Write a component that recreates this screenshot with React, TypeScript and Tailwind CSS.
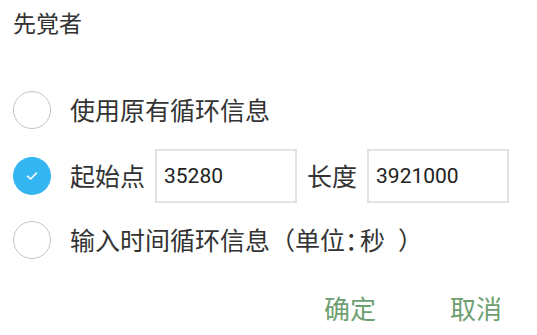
import { useState } from "react"

const font = { fontFamily: '"Noto Sans CJK SC", Roboto, sans-serif' }

function Radio({ checked, onClick }: { checked: boolean; onClick: () => void }) {
  return (
    <button
      onClick={onClick}
      className={
        "w-[38px] h-[38px] rounded-full flex items-center justify-center shrink-0 " +
        (checked ? "bg-[#33b5f1]" : "border-[1.5px] border-[#c4c4c4] bg-white")
      }
    >
      {checked && (
        <svg width="12" height="10" viewBox="0 0 12 10" fill="none">
          <path d="M1.5 5.2 L4.6 8 L10.5 2" stroke="white" strokeWidth="1.6" strokeLinecap="round" strokeLinejoin="round" />
        </svg>
      )}
    </button>
  )
}

export default function App() {
  const [mode, setMode] = useState(1)
  const [start, setStart] = useState("35280")
  const [length, setLength] = useState("3921000")

  return (
    <div className="w-[537px] h-[335px] bg-white text-[#333333] overflow-hidden" style={font}>
      <div className="pl-[13px] pt-[5px] text-[23px] leading-[34px]">先覚者</div>

      <div className="pl-[13px] mt-[49px] flex flex-col">
        <div className="flex items-center h-[44px]">
          <Radio checked={mode === 0} onClick={() => setMode(0)} />
          <span className="ml-[19px] text-[25px]">使用原有循环信息</span>
        </div>

        <div className="flex items-center h-[54px] mt-[17px]">
          <Radio checked={mode === 1} onClick={() => setMode(1)} />
          <span className="ml-[19px] text-[25px]">起始点</span>
          <input
            value={start}
            onChange={e => setStart(e.target.value)}
            className="ml-[10px] w-[142px] h-[54px] border-2 border-[#e2e2e2] px-[7px] text-[21px] text-[#222] outline-none"
            style={{ fontFamily: "Roboto, sans-serif" }}
          />
          <span className="ml-[10px] text-[25px]">长度</span>
          <input
            value={length}
            onChange={e => setLength(e.target.value)}
            className="ml-[10px] w-[142px] h-[54px] border-2 border-[#e2e2e2] px-[7px] text-[21px] text-[#222] outline-none"
            style={{ fontFamily: "Roboto, sans-serif" }}
          />
        </div>

        <div className="flex items-center h-[44px] mt-[15px]">
          <Radio checked={mode === 2} onClick={() => setMode(2)} />
          <span className="ml-[19px] text-[25px]">
            输入时间循环信息（单位<span className="tracking-[-12px]">：</span><span className="ml-[2px]">秒</span><span className="ml-[13px]">）</span>
          </span>
        </div>
      </div>

      <div className="flex justify-end items-center mt-[25px] pr-[35px] gap-[74px] text-[26px] text-[#6e9f71] h-[40px]">
        <button>确定</button>
        <button>取消</button>
      </div>
    </div>
  )
}
